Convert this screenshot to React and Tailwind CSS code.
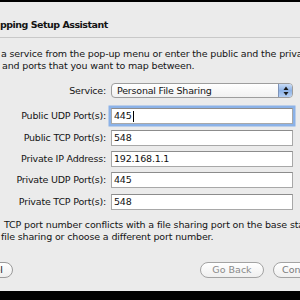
import React from 'react';

const font = { fontFamily: '"DejaVu Sans", "Liberation Sans", sans-serif' };

const rows = [
  { label: 'Public UDP Port(s):', value: '445', focused: true, mt: 'mt-[10px]' },
  { label: 'Public TCP Port(s):', value: '548', mt: 'mt-[6px]' },
  { label: 'Private IP Address:', value: '192.168.1.1', mt: 'mt-[5px]' },
  { label: 'Private UDP Port(s):', value: '445', mt: 'mt-[5px]' },
  { label: 'Private TCP Port(s):', value: '548', mt: 'mt-[6px]' },
];

const PopupArrows = () => (
  <svg width="6" height="10" viewBox="0 0 6 10">
    <path d="M3 0.5 L5.5 4 L0.5 4 Z" fill="#1a1a1a" />
    <path d="M3 9.5 L5.5 6 L0.5 6 Z" fill="#1a1a1a" />
  </svg>
);

const Field = ({ value, focused }) => (
  <div
    className={
      'h-[16px] flex items-center bg-white border border-[#a8a8a8] border-t-[#8c8c8c] pl-[2px] ' +
      (focused ? 'ring-[2.5px] ring-[#8bb2e8]' : '')
    }
  >
    <span className="text-[9.5px] leading-none tracking-[-0.2px] text-[#111]">{value}</span>
    {focused && <span className="w-[1px] h-[11px] bg-black ml-[1px]" />}
  </div>
);

export default function App() {
  return (
    <div className="w-[300px] h-[300px] overflow-hidden bg-[#ebebeb] flex flex-col text-[#141414]" style={font}>
      {/* window top edge */}
      <div className="h-[2px] bg-black shrink-0" />

      {/* title */}
      <div className="h-[36px] shrink-0 border-b border-[#c8c8c8] pt-[17px]">
        <div className="text-[9.5px] leading-[12px] font-bold tracking-[-0.5px] whitespace-nowrap">pping Setup Assistant</div>
      </div>

      {/* intro */}
      <div className="mt-[10px] text-[9.5px] leading-[11.5px] tracking-[-0.15px] whitespace-nowrap">
        <div className="pl-[1px]">a service from the pop-up menu or enter the public and the private IP</div>
        <div className="pl-[2px]">and ports that you want to map between.</div>
      </div>

      {/* service popup */}
      <div className="mt-[12px] grid grid-cols-[106px_182px] gap-x-[5px] items-center shrink-0">
        <div className="text-right text-[9.5px] leading-none tracking-[-0.2px]">Service:</div>
        <div className="h-[15px] flex rounded-[4px] border border-[#9d9d9d] overflow-hidden bg-gradient-to-b from-white to-[#f1f1f1]">
          <div className="flex-1 flex items-center pl-[5px] text-[9.5px] leading-none tracking-[-0.2px]">Personal File Sharing</div>
          <div className="w-[14px] flex items-center justify-center border-l border-[#7d93b8] bg-gradient-to-b from-[#c9dcf6] via-[#8fb3e6] to-[#b6d0f3]">
            <PopupArrows />
          </div>
        </div>
      </div>

      {/* port fields */}
      {rows.map((r) => (
        <div key={r.label} className={r.mt + ' grid grid-cols-[106px_182px] gap-x-[5px] items-center shrink-0'}>
          <div className="text-right text-[9.5px] leading-none tracking-[-0.2px] whitespace-nowrap">{r.label}</div>
          <Field value={r.value} focused={r.focused} />
        </div>
      ))}

      {/* warning */}
      <div className="mt-[9px] text-[9.5px] leading-[12px] tracking-[-0.15px] whitespace-nowrap shrink-0">
        <div className="pl-[4px]">TCP port number conflicts with a file sharing port on the base station.</div>
        <div className="pl-[1px]">file sharing or choose a different port number.</div>
      </div>

      {/* buttons */}
      <div className="mt-[19px] h-[16px] flex items-center shrink-0">
        <div className="shrink-0 -ml-[50px] w-[63px] h-[16px] rounded-full border border-[#9a9a9a] bg-gradient-to-b from-white to-[#eeeeee] flex items-center justify-end pr-[9px] text-[9.5px] leading-none">
          Cancel
        </div>
        <div className="shrink-0 ml-[187px] w-[64px] h-[16px] rounded-full border border-[#a3a3a3] bg-gradient-to-b from-white to-[#efefef] flex items-center justify-center text-[9.5px] leading-none text-[#8a8a8a]">
          Go Back
        </div>
        <div className="shrink-0 ml-[9px] w-[64px] h-[16px] rounded-full border border-[#a3a3a3] bg-gradient-to-b from-white to-[#efefef] flex items-center pl-[8px] text-[9.5px] leading-none text-[#7a7a7a] whitespace-nowrap">
          Continue
        </div>
      </div>

      {/* bottom edge */}
      <div className="flex-1" />
      <div className="h-[9px] bg-black shrink-0" />
    </div>
  );
}
